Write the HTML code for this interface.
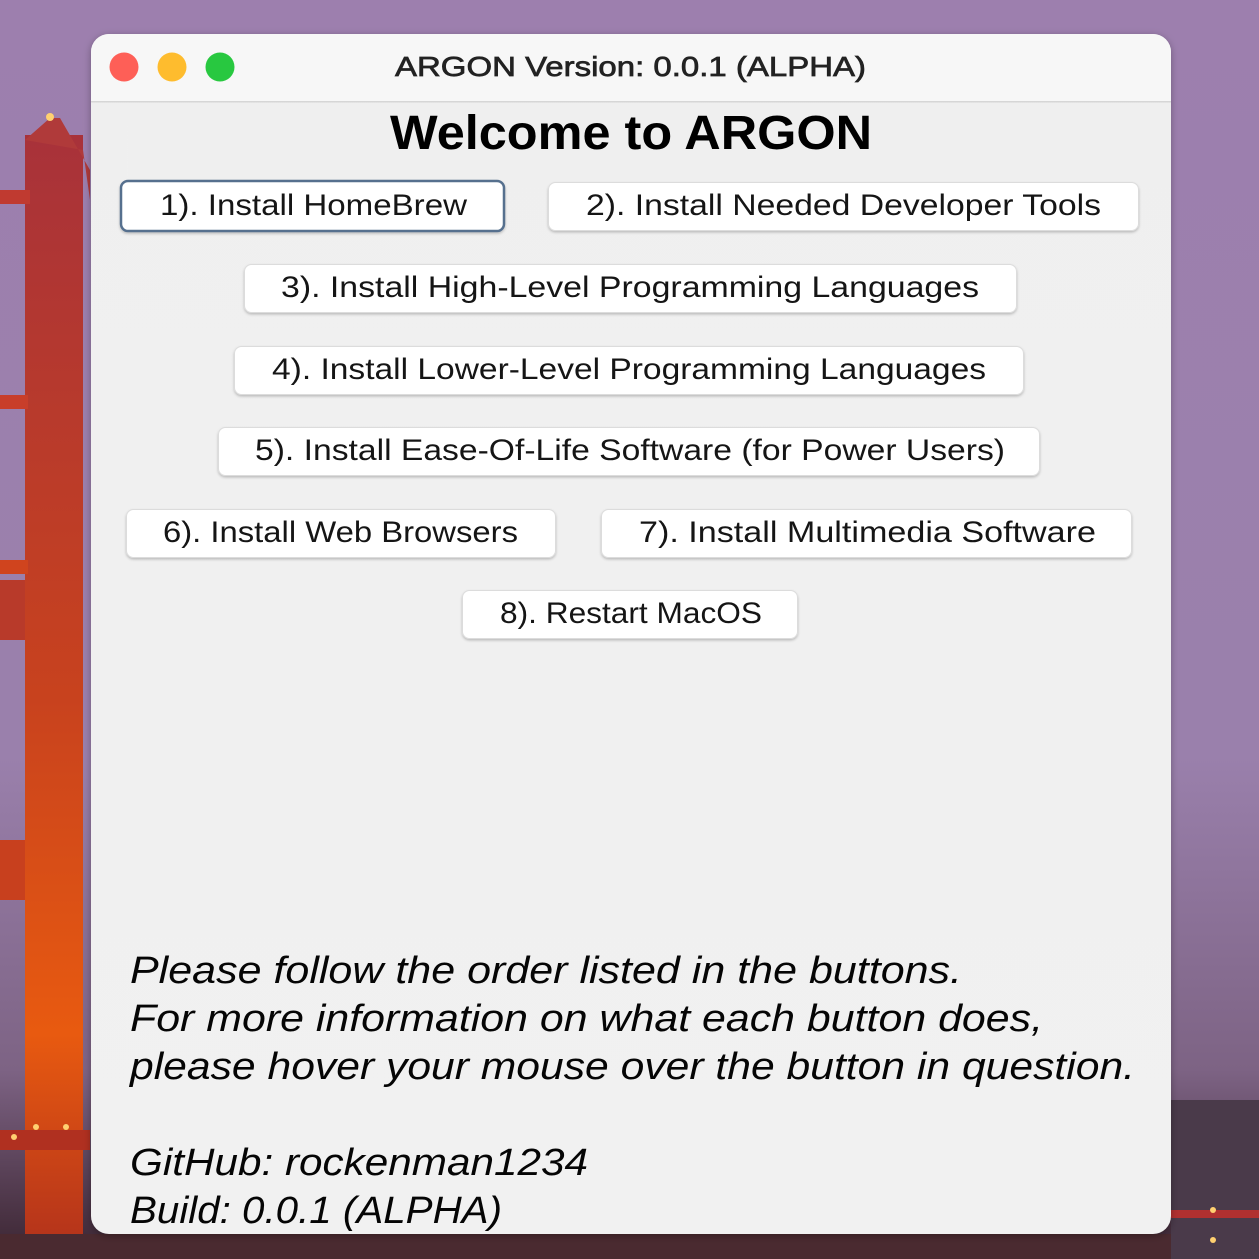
<!DOCTYPE html>
<html><head><meta charset="utf-8">
<style>
html,body{margin:0;padding:0;width:1259px;height:1259px;overflow:hidden;background:#9b80ad}
svg{display:block}
</style></head>
<body>
<svg width="1259" height="1259" viewBox="0 0 1259 1259" xmlns="http://www.w3.org/2000/svg" font-family="Liberation Sans, DejaVu Sans, sans-serif">
<defs>
<linearGradient id="sky" x1="0" y1="0" x2="0" y2="1">
<stop offset="0" stop-color="#9d7fae"/><stop offset="0.6" stop-color="#9a80ac"/><stop offset="0.85" stop-color="#7d6384"/><stop offset="1" stop-color="#3a2430"/>
</linearGradient>
<linearGradient id="tower" x1="0" y1="0" x2="0" y2="1">
<stop offset="0" stop-color="#a8323a"/><stop offset="0.5" stop-color="#c8421e"/><stop offset="0.8" stop-color="#e85a10"/><stop offset="1" stop-color="#b0301c"/>
</linearGradient>
<linearGradient id="win" x1="0" y1="0" x2="0" y2="1">
<stop offset="0" stop-color="#efefef"/><stop offset="1" stop-color="#f1f1f1"/>
</linearGradient>
<filter id="sh" x="-5%" y="-5%" width="110%" height="110%"><feDropShadow dx="0" dy="2" stdDeviation="4" flood-opacity="0.3"/></filter>
<filter id="bs" x="-5%" y="-20%" width="110%" height="150%"><feDropShadow dx="0" dy="1.5" stdDeviation="1.2" flood-opacity="0.22"/></filter>
</defs>
<rect width="1259" height="1259" fill="url(#sky)"/>
<!-- tower -->
<rect x="25" y="135" width="58" height="1124" fill="url(#tower)"/>
<polygon points="25,140 50,118 60,118 90,170 90,200 83,150" fill="#b03a3a"/>
<rect x="0" y="190" width="30" height="14" fill="#c03a30"/>
<rect x="0" y="395" width="28" height="14" fill="#c83e2a"/>
<rect x="0" y="560" width="28" height="14" fill="#d0441e"/>
<rect x="0" y="580" width="25" height="60" fill="#b83a2a"/>
<rect x="0" y="840" width="25" height="60" fill="#c8401e"/>
<rect x="0" y="1130" width="90" height="20" fill="#b03020"/>
<circle cx="50" cy="117" r="4" fill="#ffd070"/>
<!-- bottom -->
<rect x="0" y="1234" width="1259" height="25" fill="#4a2a30"/>
<rect x="1171" y="1100" width="88" height="159" fill="#4a3a4a"/>
<rect x="1171" y="1210" width="88" height="8" fill="#b03030"/>
<circle cx="1213" cy="1210" r="3" fill="#ffd070"/><circle cx="1213" cy="1240" r="3" fill="#ffd070"/>
<circle cx="14" cy="1137" r="3" fill="#ffd070"/><circle cx="36" cy="1127" r="3" fill="#ffd070"/><circle cx="66" cy="1127" r="3" fill="#ffd070"/>
<!-- window -->
<rect x="91" y="34" width="1080" height="1200" rx="18" fill="url(#win)" filter="url(#sh)"/>
<path d="M91 101 V52 a18 18 0 0 1 18 -18 H1153 a18 18 0 0 1 18 18 V101 Z" fill="#f7f7f7"/>
<rect x="91" y="101" width="1080" height="1.5" fill="#d6d6d6"/>
<circle cx="124" cy="67" r="14.5" fill="#fe5f57"/>
<circle cx="172" cy="67" r="14.5" fill="#febc2e"/>
<circle cx="220" cy="67" r="14.5" fill="#28c840"/>
<text x="395" y="76" font-size="28" fill="#222" stroke="#222" stroke-width="0.7" textLength="471" lengthAdjust="spacingAndGlyphs">ARGON Version: 0.0.1 (ALPHA)</text>
<text x="390" y="149" font-size="48" font-weight="bold" fill="#000" textLength="482" lengthAdjust="spacingAndGlyphs">Welcome to ARGON</text>
<!-- buttons -->
<g font-size="30" fill="#151515">
<rect x="121" y="181" width="383" height="50" rx="7" fill="#fff" stroke="#56708e" stroke-width="2.5" filter="url(#bs)"/>
<text x="160" y="215" textLength="307" lengthAdjust="spacingAndGlyphs">1). Install HomeBrew</text>
<g fill="#fff" stroke="#dcdcdc" filter="url(#bs)">
<rect x="548.5" y="182.5" width="590" height="48" rx="7"/>
<rect x="244.5" y="264.5" width="772" height="48" rx="7"/>
<rect x="234.5" y="346.5" width="789" height="48" rx="7"/>
<rect x="218.5" y="427.5" width="821" height="48" rx="7"/>
<rect x="126.5" y="509.5" width="429" height="48" rx="7"/>
<rect x="601.5" y="509.5" width="530" height="48" rx="7"/>
<rect x="462.5" y="590.5" width="335" height="48" rx="7"/>
</g>
<text x="586" y="215" textLength="515" lengthAdjust="spacingAndGlyphs">2). Install Needed Developer Tools</text>
<text x="281" y="297" textLength="698" lengthAdjust="spacingAndGlyphs">3). Install High-Level Programming Languages</text>
<text x="272" y="379" textLength="714" lengthAdjust="spacingAndGlyphs">4). Install Lower-Level Programming Languages</text>
<text x="255" y="460" textLength="750" lengthAdjust="spacingAndGlyphs">5). Install Ease-Of-Life Software (for Power Users)</text>
<text x="163" y="542" textLength="355" lengthAdjust="spacingAndGlyphs">6). Install Web Browsers</text>
<text x="639" y="542" textLength="457" lengthAdjust="spacingAndGlyphs">7). Install Multimedia Software</text>
<text x="500" y="623" textLength="262" lengthAdjust="spacingAndGlyphs">8). Restart MacOS</text>
</g>
<g font-size="38" font-style="italic" fill="#050505">
<text x="130" y="983" textLength="832" lengthAdjust="spacingAndGlyphs">Please follow the order listed in the buttons.</text>
<text x="130" y="1031" textLength="913" lengthAdjust="spacingAndGlyphs">For more information on what each button does,</text>
<text x="130" y="1079" textLength="1005" lengthAdjust="spacingAndGlyphs">please hover your mouse over the button in question.</text>
<text x="130" y="1175" textLength="458" lengthAdjust="spacingAndGlyphs">GitHub: rockenman1234</text>
<text x="130" y="1223" textLength="372" lengthAdjust="spacingAndGlyphs">Build: 0.0.1 (ALPHA)</text>
</g>
</svg>
</body></html>
